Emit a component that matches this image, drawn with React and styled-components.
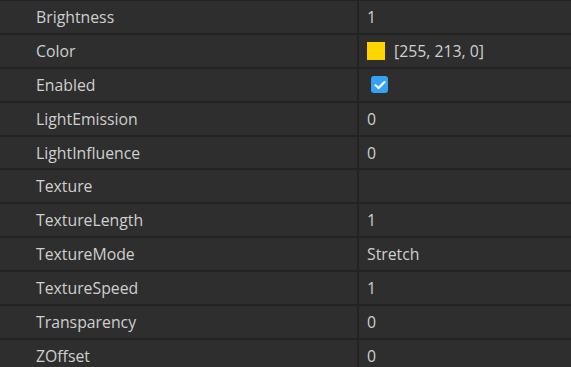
import React from "react";
import styled, { createGlobalStyle } from "styled-components";

const GlobalStyle = createGlobalStyle`
  html, body {
    margin: 0;
    padding: 0;
    background-color: #2e2e2e;
    overflow: hidden;
  }
`;

const Panel = styled.div`
  display: flex;
  flex-direction: column;
  width: 571px;
  height: 367px;
  overflow: hidden;
  background-color: #2e2e2e;
  border-top: 1px solid #232323;
  font-family: "Open Sans", Lato, sans-serif;
  font-size: 15.8px;
  color: #cfcfcf;
`;

const Row = styled.div`
  display: grid;
  grid-template-columns: 359px 1fr;
  flex: 0 0 auto;
  height: 31.9px;
  border-bottom: 2px solid #232323;
`;

const NameCell = styled.div`
  display: flex;
  align-items: center;
  padding-left: 36px;
  border-right: 2px solid #232323;
`;

const ValueCell = styled.div`
  display: flex;
  align-items: center;
  gap: 9px;
  padding-left: 8px;
`;

const Swatch = styled.span`
  width: 18px;
  height: 18px;
  background-color: ${(p) => p.color};
`;

const Check = styled.span`
  display: flex;
  align-items: center;
  justify-content: center;
  width: 17px;
  height: 17px;
  margin-left: 4px;
  border-radius: 3px;
  background-color: #35a3f5;
`;

const props = [
  { name: "Brightness", value: "1" },
  { name: "Color", value: "[255, 213, 0]", color: "#ffd500" },
  { name: "Enabled", check: true },
  { name: "LightEmission", value: "0" },
  { name: "LightInfluence", value: "0" },
  { name: "Texture", value: "" },
  { name: "TextureLength", value: "1" },
  { name: "TextureMode", value: "Stretch" },
  { name: "TextureSpeed", value: "1" },
  { name: "Transparency", value: "0" },
  { name: "ZOffset", value: "0" },
];

const App = () => {
  return (
    <>
      <GlobalStyle />
      <Panel>
        {props.map((p) => (
          <Row key={p.name}>
            <NameCell>{p.name}</NameCell>
            <ValueCell>
              {p.color && <Swatch color={p.color} />}
              {p.check ? (
                <Check>
                  <svg width="12" height="10" viewBox="0 0 12 10">
                    <path
                      d="M1.5 5.2 L4.6 8 L10.5 2"
                      fill="none"
                      stroke="#fff"
                      strokeWidth="2.2"
                      strokeLinecap="round"
                      strokeLinejoin="round"
                    />
                  </svg>
                </Check>
              ) : (
                p.value
              )}
            </ValueCell>
          </Row>
        ))}
      </Panel>
    </>
  );
};

export default App;
